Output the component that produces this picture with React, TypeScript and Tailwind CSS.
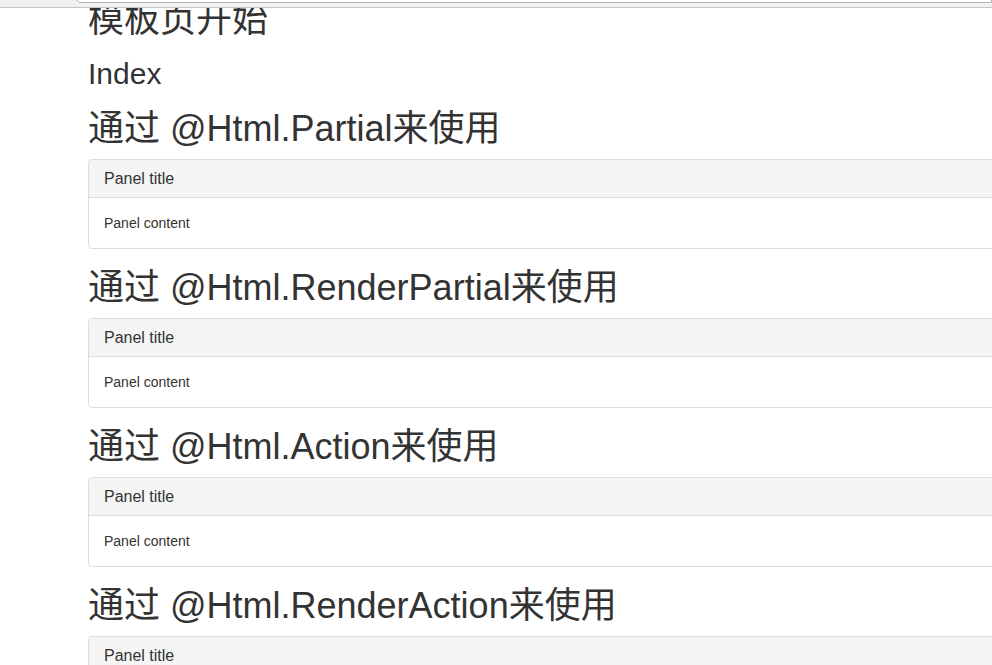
const sections = [
  '通过 @Html.Partial来使用',
  '通过 @Html.RenderPartial来使用',
  '通过 @Html.Action来使用',
  '通过 @Html.RenderAction来使用',
]

function Panel() {
  return (
    <div className="w-[1040px] rounded-[4px] border border-[#dddddd] bg-white">
      <div className="flex h-[38px] items-center rounded-t-[4px] border-b border-[#dddddd] bg-[#f5f5f5] px-[15px] text-[16px]">
        Panel title
      </div>
      <div className="flex h-[50px] items-center px-[15px] text-[14px]">
        Panel content
      </div>
    </div>
  )
}

export default function App() {
  return (
    <div className="relative h-[665px] overflow-hidden bg-white text-[#333333] [font-family:'Liberation_Sans','Noto_Sans_CJK_SC',sans-serif]">
      {/* browser chrome remnant */}
      <div className="absolute inset-x-0 top-0 z-10 h-[8px] border-b border-[#c4c4c4] bg-[#f1f1f1]">
        <div className="absolute left-[76px] right-0 top-[-6px] h-[9px] rounded-bl-[5px] border border-[#b4b4b4] bg-white" />
      </div>

      <div className="pl-[88px]">
        <h1 className="mt-[2px] text-[36px] leading-[36px]">模板页开始</h1>
        <h2 className="mt-[19px] mb-[2px] text-[30px] leading-[33px]">Index</h2>

        {sections.map((title) => (
          <div key={title}>
            <h1 className="mt-[21px] mb-[12px] text-[36px] leading-[36px]">{title}</h1>
            <Panel />
          </div>
        ))}
      </div>
    </div>
  )
}
